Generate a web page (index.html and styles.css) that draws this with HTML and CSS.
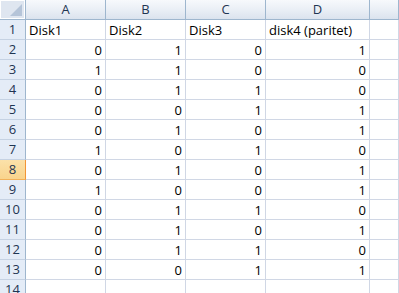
FILE: index.html
```html
<!DOCTYPE html>
<html lang="en">
<head>
  <meta charset="UTF-8">
  <title>Disk paritet</title>
  <link rel="stylesheet" href="styles.css">
</head>
<body>
  <div class="sheet">
    <div class="corner"><span class="triangle"></span></div>
    <div class="col-head">A</div>
    <div class="col-head">B</div>
    <div class="col-head">C</div>
    <div class="col-head">D</div>
    <div class="col-head"></div>

    <div class="row-head">1</div>
    <div class="cell">Disk1</div><div class="cell">Disk2</div><div class="cell">Disk3</div><div class="cell">disk4 (paritet)</div><div class="cell"></div>

    <div class="row-head">2</div>
    <div class="cell num">0</div><div class="cell num">1</div><div class="cell num">0</div><div class="cell num">1</div><div class="cell"></div>

    <div class="row-head">3</div>
    <div class="cell num">1</div><div class="cell num">1</div><div class="cell num">0</div><div class="cell num">0</div><div class="cell"></div>

    <div class="row-head">4</div>
    <div class="cell num">0</div><div class="cell num">1</div><div class="cell num">1</div><div class="cell num">0</div><div class="cell"></div>

    <div class="row-head">5</div>
    <div class="cell num">0</div><div class="cell num">0</div><div class="cell num">1</div><div class="cell num">1</div><div class="cell"></div>

    <div class="row-head">6</div>
    <div class="cell num">0</div><div class="cell num">1</div><div class="cell num">0</div><div class="cell num">1</div><div class="cell"></div>

    <div class="row-head">7</div>
    <div class="cell num">1</div><div class="cell num">0</div><div class="cell num">1</div><div class="cell num">0</div><div class="cell"></div>

    <div class="row-head active">8</div>
    <div class="cell num">0</div><div class="cell num">1</div><div class="cell num">0</div><div class="cell num">1</div><div class="cell"></div>

    <div class="row-head">9</div>
    <div class="cell num">1</div><div class="cell num">0</div><div class="cell num">0</div><div class="cell num">1</div><div class="cell"></div>

    <div class="row-head">10</div>
    <div class="cell num">0</div><div class="cell num">1</div><div class="cell num">1</div><div class="cell num">0</div><div class="cell"></div>

    <div class="row-head">11</div>
    <div class="cell num">0</div><div class="cell num">1</div><div class="cell num">0</div><div class="cell num">1</div><div class="cell"></div>

    <div class="row-head">12</div>
    <div class="cell num">0</div><div class="cell num">1</div><div class="cell num">1</div><div class="cell num">0</div><div class="cell"></div>

    <div class="row-head">13</div>
    <div class="cell num">0</div><div class="cell num">0</div><div class="cell num">1</div><div class="cell num">1</div><div class="cell"></div>

    <div class="row-head">14</div>
    <div class="cell"></div><div class="cell"></div><div class="cell"></div><div class="cell"></div><div class="cell"></div>
  </div>
</body>
</html>
```

FILE: styles.css
```css
body {
  margin: 0;
  background-color: #fff;
  font-family: 'Open Sans', sans-serif;
  font-size: 13px;
  color: #000;
  overflow: hidden;
}

.sheet {
  display: grid;
  grid-template-columns: 26px 80px 80px 80px 104px 1fr;
  grid-auto-rows: 20px;
}

.sheet > div {
  box-sizing: border-box;
  border-right: 1px solid #d0d7e5;
  border-bottom: 1px solid #d0d7e5;
  line-height: 18px;
  white-space: nowrap;
  overflow: hidden;
}

.corner {
  position: relative;
  background-color: #dfe6f0;
  box-shadow: inset 1px 1px 0 #fff, inset -1px -1px 0 #fff;
}

.sheet > .corner,
.sheet > .col-head {
  border-right-color: #9eb6ce;
  border-bottom-color: #9eb6ce;
}

.triangle {
  position: absolute;
  right: 3px;
  bottom: 3px;
  width: 12px;
  height: 12px;
  background-color: #b5c4d8;
  clip-path: polygon(100% 0, 100% 100%, 0 100%);
}

.col-head {
  background-image: linear-gradient(180deg, #f7f9fc 0%, #e9eef5 55%, #dbe3ee 100%);
  text-align: center;
  color: #1f3552;
}

.row-head {
  background-color: #e4ecf7;
  text-align: center;
  color: #1f3552;
}

.sheet > .row-head {
  border-right-color: #9eb6ce;
  border-bottom-color: #c5d2e3;
}

.sheet > .row-head.active {
  background-image: linear-gradient(180deg, #fbe1a9 0%, #f9d48d 100%);
  border-right-color: #f29536;
  border-bottom-color: #f2b15a;
}

.cell {
  padding: 1px 3px 0;
}

.num {
  text-align: right;
}
```
